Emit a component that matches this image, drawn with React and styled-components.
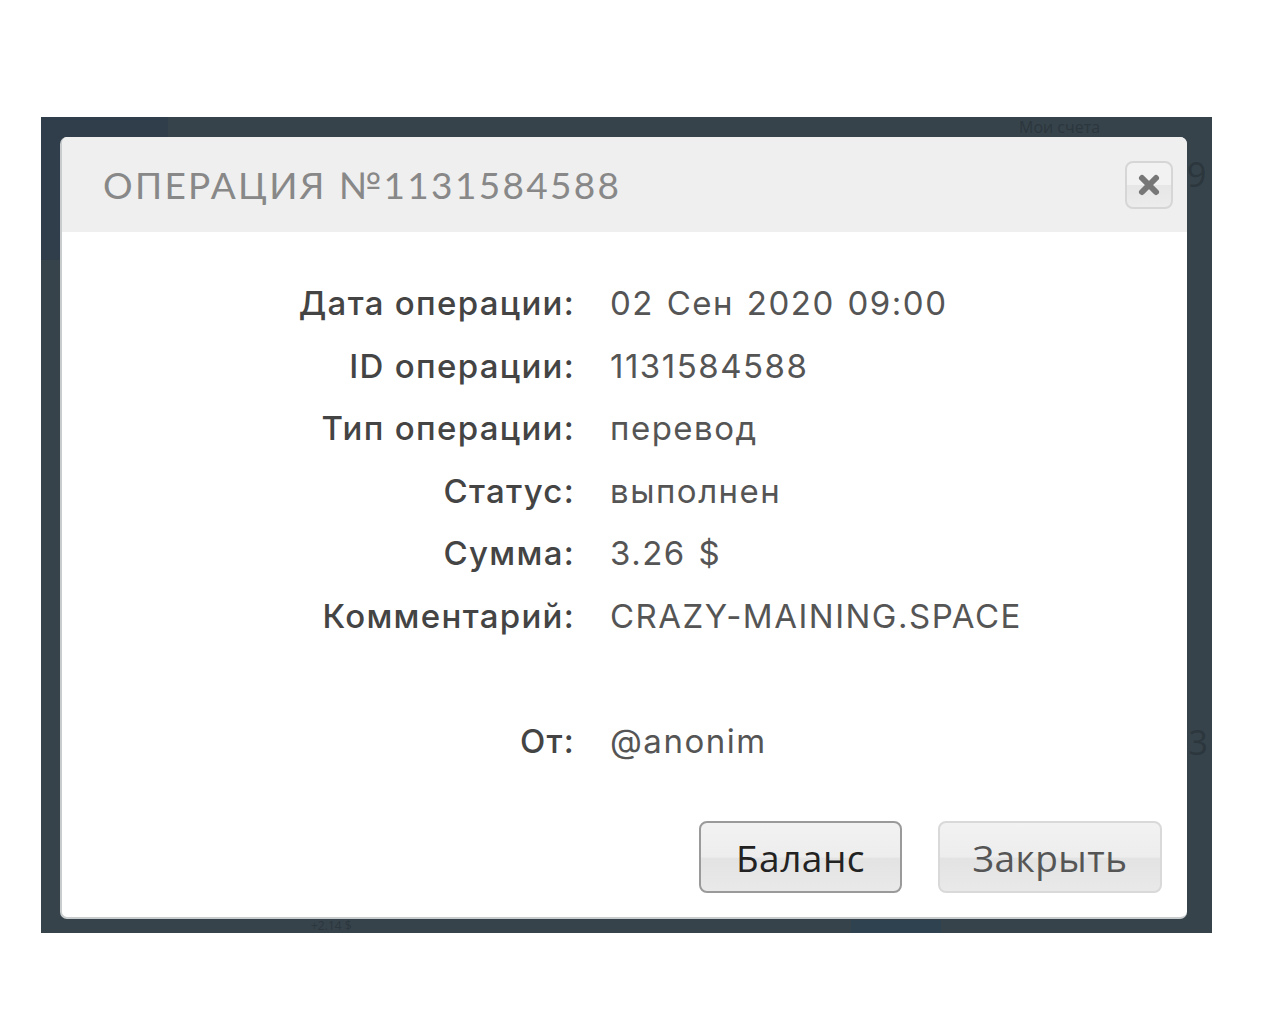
import React from 'react'
import styled, { createGlobalStyle } from 'styled-components'

const GlobalStyle = createGlobalStyle`
  html, body {
    margin: 0;
    padding: 0;
    background: #fff;
  }
  body {
    font-family: 'Open Sans', 'Liberation Sans', sans-serif;
  }
`

const Page = styled.div`
  width: 1280px;
  height: 1024px;
  padding: 117px 0 0 41px;
  box-sizing: border-box;
`

const Backdrop = styled.div`
  position: relative;
  width: 1171px;
  height: 816px;
  box-sizing: border-box;
  padding: 20px 25px 14px 19px;
  background: #36434b;
  overflow: hidden;
`

// faint shapes of the page lying under the overlay
const GhostBlock = styled.div`
  position: absolute;
  left: ${p => p.x}px;
  top: ${p => p.y}px;
  width: ${p => p.w}px;
  height: ${p => p.h}px;
  background: ${p => p.color || '#2f3e4a'};
`

const GhostText = styled.span`
  position: absolute;
  font-family: 'Open Sans', sans-serif;
  font-size: ${p => p.size || 30}px;
  line-height: 1;
  color: #2c363d;
  white-space: nowrap;
`

const Modal = styled.div`
  position: relative;
  width: 1127px;
  height: 782px;
  box-sizing: border-box;
  background: #fff;
  border-radius: 7px;
  border-left: 2px solid #c9cccd;
  border-bottom: 2px solid #c9cccd;
  display: flex;
  flex-direction: column;
  overflow: hidden;
`

const Header = styled.div`
  height: 95px;
  flex-shrink: 0;
  background: #efefef;
  display: flex;
  align-items: center;
  justify-content: space-between;
  padding: 0 14px 0 41px;
`

const Title = styled.h2`
  margin: 0;
  font-family: 'Lato', 'Liberation Sans', sans-serif;
  font-weight: 400;
  font-size: 37px;
  letter-spacing: 2.3px;
  color: #888888;
`

const CloseButton = styled.button`
  width: 48px;
  height: 48px;
  padding: 0;
  border: 2px solid #d6d6d6;
  border-radius: 8px;
  background: linear-gradient(#f2f2f2 0%, #f2f2f2 50%, #e6e6e6 51%, #ececec 100%);
  display: flex;
  align-items: center;
  justify-content: center;
  cursor: pointer;
`

const Body = styled.div`
  flex: 1;
  display: flex;
  flex-direction: column;
  padding: 40px 25px 24px 0;
`

const Details = styled.div`
  display: grid;
  grid-template-columns: 513px 1fr;
  column-gap: 35px;
  grid-auto-rows: 62.5px;
  align-items: center;
`

const Label = styled.div`
  text-align: right;
  font-family: 'Inter', 'Open Sans', sans-serif;
  font-weight: 500;
  font-size: 33px;
  letter-spacing: 1.3px;
  color: #444;
  white-space: nowrap;
`

const Value = styled.div`
  font-family: 'Inter', 'Open Sans', sans-serif;
  font-weight: 400;
  font-size: 33px;
  letter-spacing: 1.5px;
  word-spacing: 2px;
  color: #555;
  white-space: nowrap;
`

const Spacer = styled.div`
  grid-column: 1 / span 2;
`

const Footer = styled.div`
  margin-top: auto;
  display: flex;
  justify-content: flex-end;
  gap: 36px;
`

const Button = styled.button`
  height: 72px;
  width: ${p => p.w}px;
  box-sizing: border-box;
  border-radius: 8px;
  border: 2px solid ${p => (p.primary ? '#9a9a9a' : '#d9d9d9')};
  background: linear-gradient(#f2f2f2 0%, #ededed 50%, #e3e3e3 52%, #e9e9e9 100%);
  font-family: 'Open Sans', 'Liberation Sans', sans-serif;
  font-size: 37px;
  letter-spacing: 0.5px;
  color: ${p => (p.primary ? '#222' : '#555')};
  cursor: pointer;
`

const rows = [
  ['Дата операции:', '02 Сен 2020 09:00'],
  ['ID операции:', '1131584588'],
  ['Тип операции:', 'перевод'],
  ['Статус:', 'выполнен'],
  ['Сумма:', '3.26 $'],
  ['Комментарий:', 'CRAZY-MAINING.SPACE'],
]

function CloseIcon() {
  return (
    <svg width="26" height="26" viewBox="0 0 26 26">
      <path d="M6 6 L20 20 M20 6 L6 20" stroke="#777" strokeWidth="6" strokeLinecap="round" />
    </svg>
  )
}

export default function App() {
  return (
    <>
      <GlobalStyle />
      <Page>
        <Backdrop>
          <GhostBlock x={0} y={0} w={127} h={143} />
          <GhostBlock x={810} y={803} w={90} h={13} color="#2e4250" />
          <GhostText style={{ left: 978, top: 2 }} size={16}>Мои счета</GhostText>
          <GhostText style={{ left: 1146, top: 40 }} size={34}>9</GhostText>
          <GhostText style={{ left: 1128, top: 608 }} size={34}>13</GhostText>
          <GhostText style={{ left: 270, top: 803 }} size={12}>+2.14 $</GhostText>
          <Modal>
            <Header>
              <Title>ОПЕРАЦИЯ №1131584588</Title>
              <CloseButton aria-label="close">
                <CloseIcon />
              </CloseButton>
            </Header>
            <Body>
              <Details>
                {rows.map(([label, value]) => (
                  <React.Fragment key={label}>
                    <Label>{label}</Label>
                    <Value>{value}</Value>
                  </React.Fragment>
                ))}
                <Spacer />
                <Label>От:</Label>
                <Value>@anonim</Value>
              </Details>
              <Footer>
                <Button primary w={203}>Баланс</Button>
                <Button w={224}>Закрыть</Button>
              </Footer>
            </Body>
          </Modal>
        </Backdrop>
      </Page>
    </>
  )
}
